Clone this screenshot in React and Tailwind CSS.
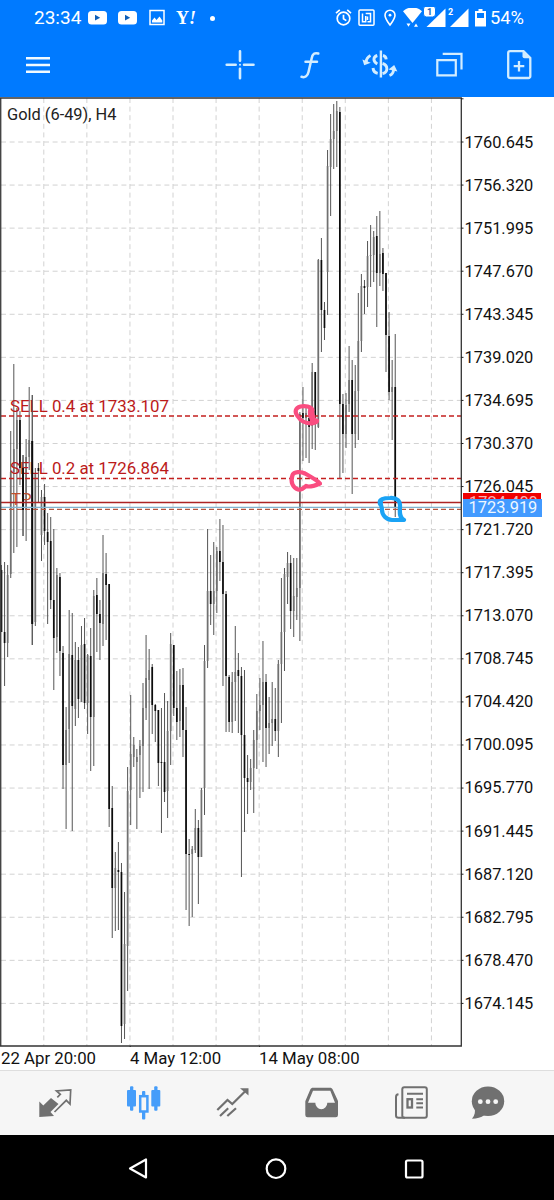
import React from "react";

// [high, bodyTop, bodyBottom, low, falling]
const candles = [
  [565, 570, 632, 632, 1], [562, 632, 643, 686, 1], [565, 575, 643, 657, 0],
  [431, 472, 574, 578, 0], [364, 449, 472, 553, 0], [408, 420, 449, 547, 0],
  [411, 420, 468, 485, 1], [455, 468, 510, 536, 1], [439, 457, 510, 541, 0],
  [387, 440, 457, 470, 0], [395, 441, 624, 645, 1], [468, 473, 622, 626, 0],
  [463, 468, 471, 503, 1], [490, 497, 535, 561, 0], [484, 497, 531, 545, 1],
  [513, 532, 542, 624, 1], [517, 541, 600, 609, 1], [529, 600, 638, 690, 1],
  [568, 575, 637, 653, 0], [573, 577, 651, 676, 1], [646, 653, 765, 789, 1],
  [707, 730, 765, 829, 0], [610, 654, 729, 763, 0], [613, 655, 706, 831, 1],
  [642, 660, 709, 726, 0], [647, 660, 699, 718, 1], [626, 645, 702, 702, 0],
  [618, 644, 703, 709, 1], [654, 655, 703, 734, 0], [628, 656, 717, 771, 1],
  [590, 596, 717, 766, 0], [578, 595, 614, 652, 1], [600, 614, 623, 660, 1],
  [535, 573, 624, 646, 0], [553, 574, 585, 640, 1], [584, 584, 809, 827, 1],
  [786, 808, 888, 938, 1], [852, 868, 888, 931, 0], [842, 870, 872, 930, 1],
  [863, 872, 1026, 1043, 1], [892, 944, 1024, 1039, 0], [767, 791, 946, 991, 0],
  [695, 754, 790, 825, 0], [737, 745, 757, 767, 0], [749, 757, 762, 829, 0],
  [740, 746, 755, 798, 0], [683, 708, 746, 792, 0], [635, 678, 708, 720, 0],
  [649, 670, 680, 789, 0], [664, 667, 705, 734, 1], [704, 705, 711, 742, 1],
  [710, 710, 763, 786, 1], [708, 762, 763, 833, 1], [693, 762, 792, 802, 1],
  [701, 731, 791, 818, 0], [633, 644, 731, 765, 0], [645, 645, 708, 716, 1],
  [671, 708, 722, 740, 1], [669, 685, 721, 737, 0], [668, 685, 730, 757, 1],
  [707, 730, 854, 910, 1], [839, 854, 855, 926, 1], [846, 849, 854, 917, 0],
  [809, 828, 850, 853, 0], [820, 828, 857, 904, 1], [788, 790, 857, 857, 0],
  [645, 661, 788, 815, 0], [529, 591, 661, 668, 0], [555, 591, 604, 625, 1],
  [542, 591, 604, 635, 0], [547, 551, 591, 613, 0], [519, 551, 562, 581, 1],
  [525, 562, 594, 686, 1], [591, 594, 676, 732, 1], [675, 677, 722, 732, 1],
  [672, 682, 722, 733, 0], [626, 672, 682, 721, 0], [653, 670, 676, 733, 1],
  [667, 676, 735, 877, 1], [670, 735, 778, 832, 1], [755, 778, 782, 814, 1],
  [759, 768, 782, 790, 0], [730, 740, 768, 813, 0], [694, 711, 740, 769, 0],
  [678, 705, 711, 730, 0], [641, 682, 705, 762, 0], [674, 682, 728, 767, 1],
  [697, 723, 728, 754, 0], [682, 719, 723, 746, 0], [688, 719, 731, 741, 1],
  [660, 664, 731, 757, 0], [578, 632, 664, 723, 0], [568, 574, 632, 671, 0],
  [552, 563, 577, 604, 0], [555, 563, 611, 629, 1], [558, 596, 611, 637, 0],
  [558, 588, 597, 620, 0], [412, 414, 588, 641, 0], [387, 413, 418, 461, 1],
  [405, 413, 418, 458, 0], [408, 418, 427, 463, 1], [363, 372, 426, 449, 0],
  [372, 372, 422, 450, 1], [259, 260, 427, 428, 0], [238, 260, 310, 352, 1],
  [302, 310, 328, 340, 1], [150, 166, 272, 315, 0], [114, 139, 167, 216, 0],
  [104, 131, 139, 169, 0], [101, 111, 131, 167, 0], [107, 112, 404, 478, 1],
  [394, 404, 434, 473, 1], [393, 405, 434, 448, 0], [346, 380, 404, 412, 0],
  [360, 380, 434, 494, 1], [365, 391, 434, 448, 0], [293, 341, 391, 440, 0],
  [274, 286, 341, 352, 0], [280, 286, 288, 314, 1], [241, 256, 287, 307, 0],
  [225, 255, 256, 287, 0], [231, 237, 255, 282, 0], [216, 236, 273, 327, 1],
  [211, 254, 273, 286, 0], [248, 253, 274, 291, 1], [273, 273, 335, 372, 1],
  [312, 336, 392, 400, 1], [360, 387, 392, 440, 0], [334, 387, 508, 517, 1],
];

const prices = [
  "1760.645", "1756.320", "1751.995", "1747.670", "1743.345", "1739.020",
  "1734.695", "1730.370", "1726.045", "1721.720", "1717.395", "1713.070",
  "1708.745", "1704.420", "1700.095", "1695.770", "1691.445", "1687.120",
  "1682.795", "1678.470", "1674.145",
];

const STEP = 43.07;

const StatusBar = () => (
  <div className="flex h-9 items-center pl-[34px] text-[19px] text-white">
    <span className="w-[54px] leading-9">23:34</span>
    {[0, 1].map((i) => (
      <svg key={i} className="mr-[11px] h-5 w-[19px]" viewBox="0 0 19 20" fill="currentColor">
        <rect y="3" width="19" height="13.5" rx="3.5" />
        <path d="M7 6.8v5.8l5.2-2.9z" fill="#0f5fb8" />
      </svg>
    ))}
    <svg className="ml-px h-5 w-4" viewBox="0 0 16 20" fill="none" stroke="currentColor">
      <rect x="1" y="2.5" width="14" height="14" strokeWidth="1.5" />
      <path d="M3 14.5v-2l2.5-3 2 2.5 3-3.5 2.8 4v2z" fill="currentColor" stroke="none" />
    </svg>
    <span className="ml-[11px] w-[33px] font-['Liberation_Serif',serif] text-[18px] font-bold italic leading-none">
      <span className="not-italic">Y</span>!
    </span>
    <span className="ml-px size-[5px] rounded-full bg-white" />
    <svg className="ml-[120px] h-5 w-[17px]" viewBox="0 0 17 20" fill="none" stroke="currentColor" strokeWidth="1.7">
      <circle cx="8.5" cy="10.5" r="6.3" />
      <path d="M8.5 6.8v4l2.8 1.8M1 5.2l3.8-3.3M16 5.2l-3.8-3.3" />
    </svg>
    <svg className="ml-[6px] h-5 w-[17px]" viewBox="0 0 17 20" fill="none" stroke="currentColor" strokeWidth="1.5">
      <rect x="1" y="2" width="15" height="15.3" rx="1" />
      <path d="M4.5 5.5v8.3h3.2V8M7.7 5.5h4.8v8.3H9.5M9.5 8.5v3.5" />
    </svg>
    <svg className="ml-[9px] h-5 w-3" viewBox="0 0 12 20" fill="none" stroke="currentColor" strokeWidth="1.6">
      <path d="M6 17C3.5 13.6 1 10.5 1 7.2a5 5 0 0 1 10 0C11 10.5 8.5 13.6 6 17z" />
      <circle cx="6" cy="7.2" r="1.4" fill="currentColor" stroke="none" />
    </svg>
    <svg className="ml-[7px] h-5 w-[19px]" viewBox="0 0 19 20" fill="currentColor">
      <path d="M0 3.3C5-1.8 14-1.8 19 3.3L9.5 15z" />
      <path d="M3.5 15.5h4l-2 3.2zM11 18.7h4l-2-3.2z" />
    </svg>
    <svg className="h-[22px] w-[24px]" viewBox="0 0 24 22">
      <path d="M23.5 1.5V20h-19z" fill="currentColor" />
      <rect x="1.5" y="-1" width="12" height="11" rx="3" fill="currentColor" stroke="#007aff" />
      <text x="7.5" y="7.8" fontSize="9" fontWeight="700" textAnchor="middle" fill="#1b5fae">1</text>
    </svg>
    <svg className="ml-px h-[22px] w-[22px]" viewBox="0 0 22 22" fill="currentColor">
      <path d="M21.5 1.5V20H3z" />
      <text x="3.5" y="7.5" fontSize="9" fontWeight="700" textAnchor="middle">2</text>
    </svg>
    <svg className="ml-[6px] h-5 w-[11px]" viewBox="0 0 11 20">
      <path d="M3.5 1h4v2H11v15.5H0V3h3.5z" fill="currentColor" />
      <path d="M2 5h7v5H2z" fill="#007aff" />
    </svg>
    <span className="ml-[4px] text-[18.3px] leading-9">54%</span>
  </div>
);

const Toolbar = () => (
  <div className="flex h-[58px] items-center pl-[22px] text-[#d3edff]">
    <svg className="size-8" viewBox="0 0 32 32" stroke="#f2faff" strokeWidth="2.5">
      <path d="M4 9.2h24M4 16h24M4 22.7h24" />
    </svg>
    <svg className="ml-[170px] size-8" viewBox="0 0 32 32" stroke="currentColor" strokeWidth="2.6" strokeLinecap="round">
      <path d="M16 2.3v9.5M16 19.8v9.5M2.7 15.7h9M20 15.7h9.5" />
      <path d="M16 15.7h.01" strokeWidth="2" />
    </svg>
    <svg className="ml-[38px] size-8" viewBox="0 0 32 32" fill="none" stroke="currentColor" strokeWidth="2.5" strokeLinecap="round">
      <path d="M24.3 4.5c-3.6-1.2-5.7.6-6.6 4.7L14.5 23c-.9 4-3.3 6-7 4.8M11.5 12.7H23" />
    </svg>
    <svg className="ml-[36px] h-8 w-9" viewBox="0 0 36 32" fill="none" stroke="currentColor" strokeWidth="2.9">
      <path d="M8.5 6.5C5.5 8 4.3 10 4.2 13" />
      <path d="M.4 10.5L2.2 16.2l6.6-2.4z" fill="currentColor" stroke="none" />
      <path d="M15.3 6.5c-4.5 1.3-4.5 6 0 8.5M11 19c.3 2.8 1.7 4.7 4.7 5.3" />
      <path d="M18.9 1.5v27" strokeWidth="2.4" />
      <path d="M21 6.5c1.8.4 3 1.7 3.2 3.8M20.5 14.5c5.8 1.7 5.8 8.7 0 10" />
      <path d="M27.5 26.5c2.8-1 4-3.2 4.2-6.5" />
      <path d="M26.5 20.5l5.7-4.4 3.2 6.3z" fill="currentColor" stroke="none" />
    </svg>
    <svg className="ml-[36px] size-8" viewBox="0 0 32 32" fill="none" stroke="currentColor" strokeWidth="2.2">
      <path d="M3.3 11.2h18.5v15.2H3.3zM8.7 4.8h18.8v15.7" />
    </svg>
    <svg className="ml-[37px] size-8" viewBox="0 0 32 32" fill="none" stroke="currentColor" strokeWidth="2.3">
      <path d="M7 2.2h13.5l6.8 6.8v18.2a1.8 1.8 0 0 1-1.8 1.8H7a1.8 1.8 0 0 1-1.8-1.8V4A1.8 1.8 0 0 1 7 2.2z" />
      <path d="M19.5 2.2v5a2 2 0 0 0 2 2h5.8z" fill="currentColor" stroke="none" />
      <path d="M16 12v10.5M10.7 17.2h10.6" />
    </svg>
  </div>
);

const Candle = ({ x, data }) => {
  const [high, top, bottom, low, falling] = data;
  return (
    <g>
      <rect x={x - 0.5} y={high} width="1" height={low - high} fill="#555" />
      <rect
        x={x - 0.85}
        y={top}
        width="1.7"
        height={Math.max(bottom - top, 1)}
        fill={falling ? "#0c0c0c" : "#707070"}
      />
    </g>
  );
};

const Chart = () => (
  <svg
    className="block h-[950px] w-[466px] shrink-0"
    viewBox="0 97 466 950"
    fill="none"
    fontFamily="Roboto, sans-serif"
  >
    <g stroke="#d2d2d2" strokeDasharray="5 3.6">
      {prices.map((p, i) => (
        <path key={p} d={`M1 ${142 + i * STEP}H461`} />
      ))}
      {Array.from({ length: 10 }, (_, i) => (
        <path key={i} d={`M${43.8 + i * STEP} 98V1046`} />
      ))}
    </g>
    {candles.map((c, i) => (
      <Candle key={i} x={1.5 + i * 3.076} data={c} />
    ))}
    <g fontSize="16.8" fill="#bb1a1a">
      <text x="10" y="411.5" textLength="159" lengthAdjust="spacingAndGlyphs">SELL 0.4 at 1733.107</text>
      <text x="10" y="474" textLength="159" lengthAdjust="spacingAndGlyphs">SELL 0.2 at 1726.864</text>
      <text x="11" y="504.5" fill="#c05030">TP</text>
    </g>
    {/* these two bars run in front of the order labels */}
    <Candle x={1.5 + 7 * 3.076} data={candles[7]} />
    <Candle x={1.5 + 10 * 3.076} data={candles[10]} />
    <g stroke="#c4201f" strokeWidth="1.3">
      <path d="M1 416H461M1 478.5H461" strokeDasharray="5 3" />
      <path d="M1 509.3H461" stroke="#b5563f" strokeDasharray="5 3" />
      <path d="M1 502.5H461" stroke="#ad2424" />
      <path d="M1 507.3H461" stroke="#7fb3cf" />
    </g>
    {/* frame and axis ticks */}
    <path d="M.7 98V1046" stroke="#444" strokeWidth="1.4" />
    <path d="M0 98H461.3V1046H0" stroke="#333" strokeWidth="1.3" />
    <g stroke="#222">
      {prices.map((p, i) => (
        <path key={p} d={`M461 ${142 + i * STEP}h2.5`} />
      ))}
      <path d="M461 98.8h2.5M130.2 1046v2M259.6 1046v2" />
    </g>
    {/* freehand marks */}
    <g strokeLinecap="round" strokeLinejoin="round" strokeWidth="4.2">
      <path
        stroke="#fa4d80"
        d="M312.5 410C311 406.500 305 405.500 300.500 406.500C295 408 294.500 412 297.500 416C300 420 303 423.500 311 423.300C314 423 311 418 310 414C309.500 410 311 407 312 411C313 416 313 421 317 420.500Q317.500 422.500 312 423.300"
      />
      <path
        stroke="#fa4d80"
        d="M292.5 475C290 482 293 488 298 489.5C302 490 304 488 306 486C309 487.5 314 486 320 483.5C317 480 310 476.5 305 473.5C301 471.5 294 471.5 292.5 475"
      />
      <path
        stroke="#1aa3f5"
        d="M380 504C378.5 499 384 498 390 498C397 497.5 400.5 501 400 507C399.5 513 399.5 518 404 520H392C386 519.5 382 515 382 510C382 506 380 505 381 501"
      />
    </g>
  </svg>
);

const PriceAxis = () => (
  <div className="relative flex-1 pt-[23.5px] text-[16.4px] text-[#111]">
    {prices.map((p) => (
      <div key={p} className="-ml-[1.5px] h-[43.07px] leading-[43.07px]">
        {p}
      </div>
    ))}
    {/* order and bid tags lie over the scale */}
    <div className="absolute left-[-3px] top-[396px] h-[6px] w-[78px] overflow-hidden bg-[#f00000] pl-[6px] leading-[20px] text-[#ffb0b0]">
      1724.400
    </div>
    <div className="absolute left-[-3px] top-[402px] h-[18px] w-[79px] bg-[#429aff] pl-[5.5px] leading-[18px] text-[#eef7ff]">
      1723.919
    </div>
  </div>
);

const TabBar = () => (
  <div className="flex h-[65px] shrink-0 items-center border-t border-[#dedede] bg-[#f6f6f6] pl-[37px] text-[#707070]">
    <svg className="size-9" viewBox="0 0 36 36">
      <path d="M2.3 32V16.5l4 4L14 13l7.5 6-8 8 3.500 4z" fill="currentColor" />
      <path
        d="M20.3 12.3l3-3-3.8-3.3L33.7 5l-.7 14-3.7-3.7L17.5 27"
        fill="none"
        stroke="currentColor"
        strokeWidth="1.7"
      />
    </svg>
    <svg className="ml-[52px] size-9 text-[#459dfa]" viewBox="0 0 36 36" fill="currentColor">
      <rect x="2" y="5" width="9" height="16.5" rx="1" />
      <rect x="5" y="1.3" width="3.3" height="24.5" rx="1" />
      <rect x="26.3" y="5" width="9" height="16.5" rx="1" />
      <rect x="29.2" y="1.3" width="3.3" height="24.5" rx="1" />
      <rect x="17" y="6" width="3.3" height="28.5" rx="1" />
      <rect x="15.2" y="11.2" width="7.2" height="15.3" fill="#f6f6f6" stroke="currentColor" strokeWidth="2.5" />
    </svg>
    <svg className="ml-[53px] size-9" viewBox="0 0 36 36" fill="none" stroke="currentColor" strokeWidth="2.2">
      <path d="M3.3 25l10.2-10 4.8 4L32 5.5M6 31l8.2-7.7M13.3 31l8.7-7.7" />
      <path d="M26 3.3h8.5v7.2z" fill="currentColor" stroke="none" />
    </svg>
    <svg className="ml-[53px] size-9" viewBox="0 0 36 36">
      <path
        d="M10 2.7h17c1.3 0 2 .5 2.7 1.7l5.1 11c.2.6.2 1 .2 1.6V30a2.3 2.3 0 0 1-2.3 2.3H4.6A2.3 2.3 0 0 1 2.3 30V17c0-.6 0-1 .3-1.6l4.7-11C7.9 3.2 8.7 2.7 10 2.7zM10 5.7L5 17.700h7.3a6 6.6 0 0 0 12 0H32L27.3 5.7z"
        fill="currentColor"
        fillRule="evenodd"
      />
    </svg>
    <svg className="ml-[54px] size-9" viewBox="0 0 36 36" fill="none" stroke="currentColor" strokeWidth="2">
      <rect x="9.3" y="2.3" width="24.5" height="30.5" rx="2" />
      <path d="M5.5 9.3C3.7 9.5 3 10.3 3 12v18.5c0 1.5 1 2.3 2.5 2.3H12M14 8.7h16M23.3 14.2H30M23.3 18.3H30M23.3 22.4H30" />
      <rect x="14.5" y="14.2" width="4.5" height="8.3" strokeWidth="2.3" />
    </svg>
    <svg className="ml-[41px] size-9" viewBox="0 0 36 36">
      <ellipse cx="18" cy="16.2" rx="16.2" ry="14.8" fill="currentColor" />
      <path d="M4.5 23c1 3.5.5 7-2.5 10.7 5 0 9-1 12.5-3.7z" fill="currentColor" />
      <g fill="#f6f6f6">
        <circle cx="10.3" cy="16.7" r="2.4" />
        <circle cx="18" cy="16.7" r="2.4" />
        <circle cx="25.7" cy="16.7" r="2.4" />
      </g>
    </svg>
  </div>
);

const SystemNav = () => (
  <div className="flex h-[65px] shrink-0 items-center bg-black pl-[126px]">
    <svg className="size-6" viewBox="0 0 24 24" fill="none" stroke="#fff" strokeWidth="2.2" strokeLinejoin="round">
      <path d="M4 12.5L20 3.5v18z" />
    </svg>
    <svg className="ml-[114px] size-6" viewBox="0 0 24 24" fill="none" stroke="#fff" strokeWidth="2.2">
      <circle cx="12" cy="12.7" r="9.3" />
    </svg>
    <svg className="ml-[114px] size-6" viewBox="0 0 24 24" fill="none" stroke="#fff" strokeWidth="2.2">
      <rect x="4" y="4.5" width="16.5" height="17" rx="1.5" />
    </svg>
  </div>
);

const App = () => {
  return (
    <div className="flex h-[1200px] w-[554px] flex-col overflow-hidden bg-white font-['Roboto',sans-serif]">
      <header className="h-[97px] shrink-0 bg-[#007aff]">
        <StatusBar />
        <Toolbar />
      </header>
      <main className="relative flex h-[950px] shrink-0">
        <Chart />
        <PriceAxis />
        <span className="absolute left-[7px] top-[8px] text-[16.4px] leading-[20px] text-[#222]">
          Gold (6-49), H4
        </span>
      </main>
      <div className="flex h-[23px] shrink-0 text-[16.8px] leading-[22px] text-[#111]">
        <span className="w-[129px] pl-px">22 Apr 20:00</span>
        <span className="w-[130px] pl-px">4 May 12:00</span>
        <span>14 May 08:00</span>
      </div>
      <TabBar />
      <SystemNav />
    </div>
  );
};

export default App;
